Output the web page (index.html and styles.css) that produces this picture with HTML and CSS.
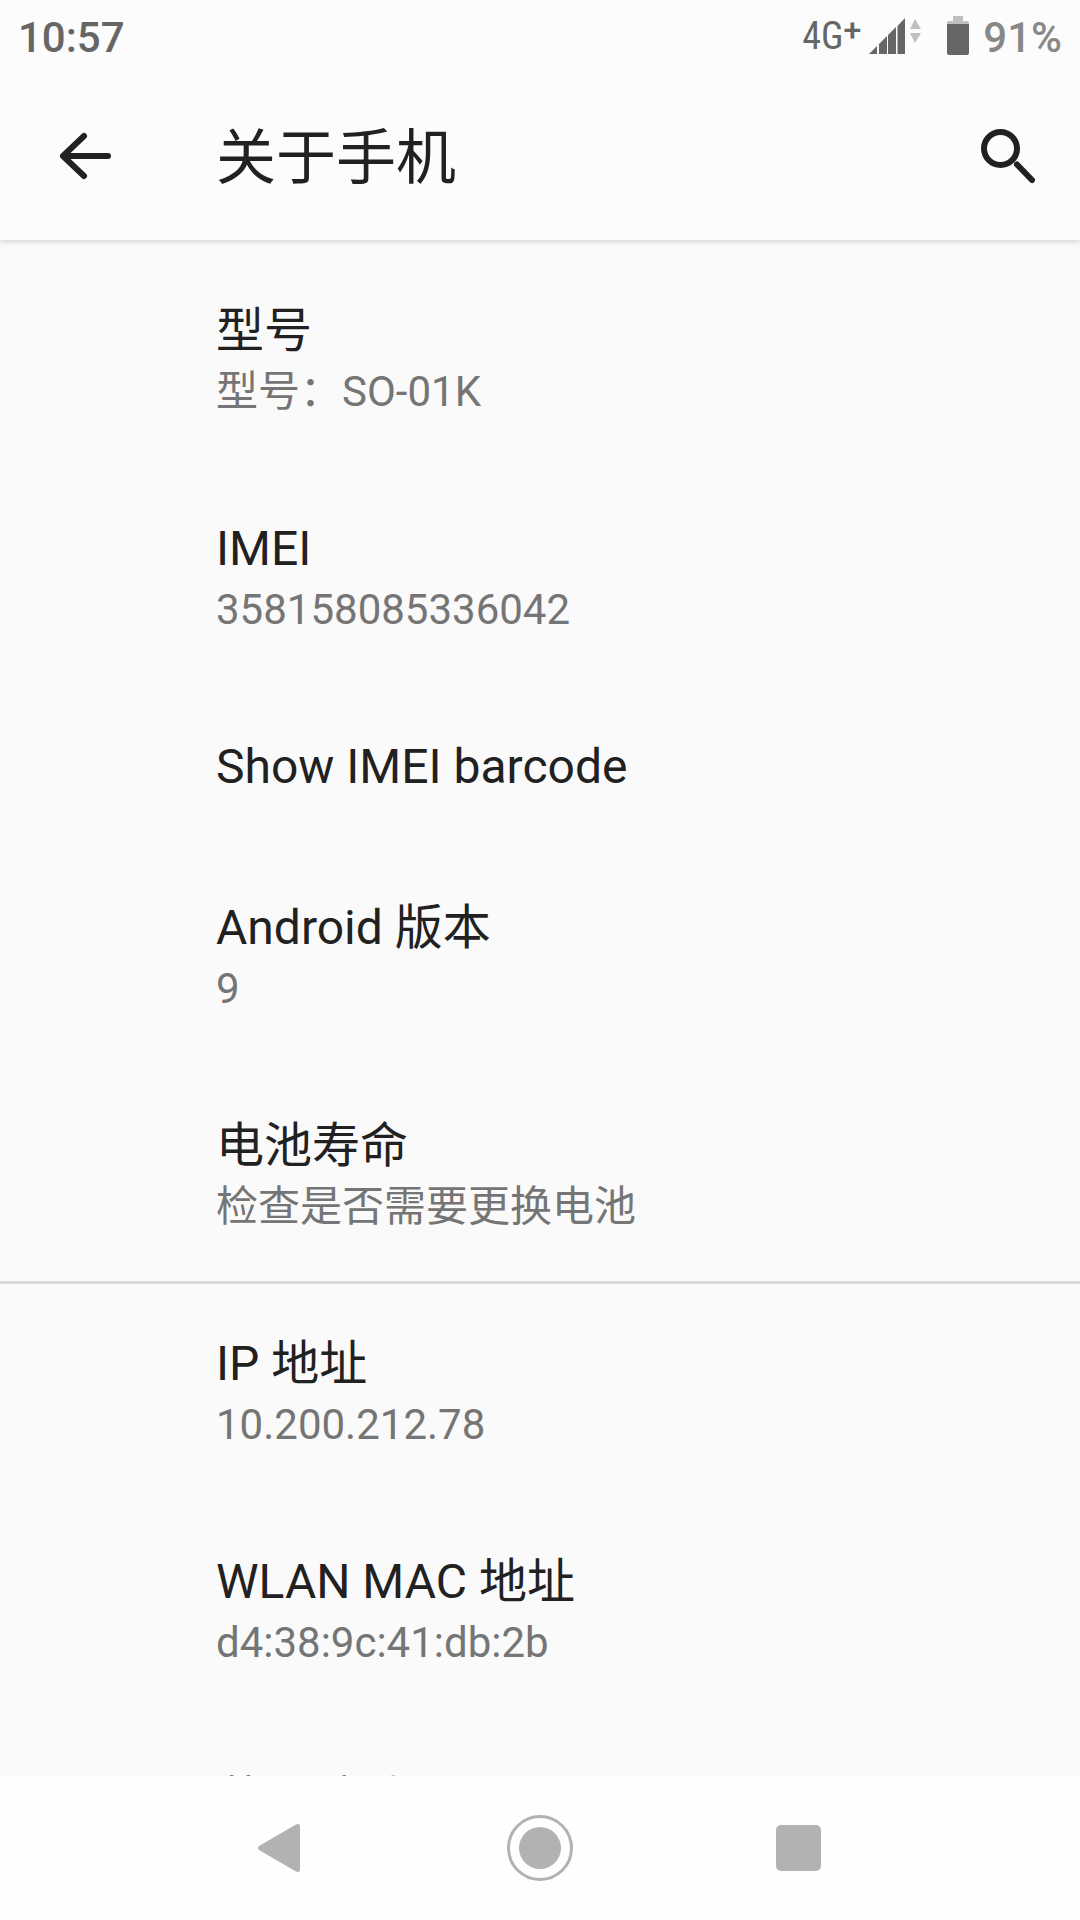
FILE: index.html
```
<!DOCTYPE html>
<html lang="zh-CN">
<head>
  <meta charset="UTF-8">
  <title>关于手机</title>
  <meta name="viewport" content="width=device-width, initial-scale=1.0">
  <link rel="stylesheet" href="styles.css">
</head>
<body>
  <div class="status-bar">
    <span class="clock">10:57</span>
    <div class="status-icons">
      <span class="network">4G<sup>+</sup></span>
      <svg class="signal" width="52" height="40" viewBox="0 0 52 40" aria-hidden="true">
        <path fill="#666" d="M0 38 8 30V38ZM10 38V28L18 20V38ZM19 38V19L27 11V38ZM28.500 38V10L36 2V38Z"/>
        <path fill="#c0c0c0" d="M41 13 46 3 52 13ZM41 17H52L46 27Z"/>
      </svg>
      <svg class="battery" width="22" height="40" viewBox="0 0 22 40" aria-hidden="true">
        <path fill="#c0c0c0" d="M6 0H16V5H20Q22 5 22 7V9H0V7Q0 5 2 5H6Z"/>
        <path fill="#666" d="M0 8H22V37Q22 39 20 39H2Q0 39 0 37Z"/>
      </svg>
      <span class="percent">91%</span>
    </div>
  </div>

  <header class="app-bar">
    <button class="icon-btn" aria-label="返回">
      <svg width="72" height="72" viewBox="0 0 72 72" fill="none" stroke="#212121" stroke-width="6" stroke-linecap="round" stroke-linejoin="round">
        <path d="M60 36H15M36 16 15 36 36 56"/>
      </svg>
    </button>
    <h1>关于手机</h1>
    <button class="icon-btn" aria-label="搜索">
      <svg width="72" height="72" viewBox="0 0 72 72" fill="none" stroke="#212121" stroke-width="6" stroke-linecap="round">
        <circle cx="28.500" cy="28.500" r="16.500"/>
        <path d="M45 44.500 60 60"/>
      </svg>
    </button>
  </header>

  <main>
    <section class="group">
      <a class="row" href="#model"><span class="title">型号</span><span class="summary">型号：SO-01K</span></a>
      <a class="row" href="#imei"><span class="title">IMEI</span><span class="summary">358158085336042</span></a>
      <a class="row" href="#barcode"><span class="title">Show IMEI barcode</span></a>
      <a class="row" href="#android"><span class="title">Android 版本</span><span class="summary">9</span></a>
      <a class="row" href="#battery"><span class="title">电池寿命</span><span class="summary">检查是否需要更换电池</span></a>
    </section>
    <section class="group">
      <a class="row" href="#ip"><span class="title">IP 地址</span><span class="summary">10.200.212.78</span></a>
      <a class="row" href="#mac"><span class="title">WLAN MAC 地址</span><span class="summary">d4:38:9c:41:db:2b</span></a>
      <a class="row" href="#bluetooth"><span class="title">蓝牙地址</span></a>
    </section>
  </main>

  <nav class="nav-bar">
    <button aria-label="后退">
      <svg width="72" height="72" viewBox="0 0 72 72" fill="#b2b2b2">
        <path d="M14 34 51 12.500Q55 11 55 15V57Q55 61 51 59.500L14 38Q12 36 14 34Z"/>
      </svg>
    </button>
    <button aria-label="主屏幕">
      <svg width="72" height="72" viewBox="0 0 72 72">
        <circle cx="36" cy="36" r="31.500" fill="none" stroke="#b2b2b2" stroke-width="3"/>
        <circle cx="36" cy="36" r="21" fill="#b2b2b2"/>
      </svg>
    </button>
    <button aria-label="最近任务">
      <svg width="72" height="72" viewBox="0 0 72 72" fill="#b2b2b2">
        <rect x="13" y="13" width="45" height="46" rx="5"/>
      </svg>
    </button>
  </nav>
</body>
</html>
```
FILE: styles.css
```
* {
  box-sizing: border-box;
}
body {
  margin: 0;
  height: 100vh;
  display: flex;
  flex-direction: column;
  overflow: hidden;
  font-family: Roboto, 'Noto Sans CJK SC', sans-serif;
  background: #fafafa;
  color: #212121;
}
button {
  display: flex;
  justify-content: center;
  padding: 0;
  border: 0;
  background: none;
  cursor: pointer;
}

/* Status bar, kept above the title bar's shadow */
.status-bar {
  flex: none;
  position: relative;
  z-index: 1;
  display: flex;
  justify-content: space-between;
  height: 72px;
  padding: 0 18px;
  background: #fcfcfc;
  font-size: 42px;
  font-weight: 500;
  line-height: 76px;
  color: #666;
}
.status-icons {
  display: flex;
}
.status-icons svg {
  margin-top: 16px;
}
.network {
  font-family: 'Roboto Condensed', 'Liberation Sans Narrow', Roboto, sans-serif;
  font-size: 38px;
  font-weight: 400;
  line-height: 73px;
}
.network sup {
  font-family: Roboto, sans-serif;
  font-size: 32px;
  font-weight: 500;
  line-height: 0;
  vertical-align: 8px;
}
.signal {
  margin: 0 26px 0 8px;
}
.battery {
  margin-right: 14px;
}
.percent {
  color: #888;
}

/* Title bar */
.app-bar {
  flex: none;
  position: relative;
  display: flex;
  align-items: center;
  height: 168px;
  padding: 0 36px 0 48px;
  background: #fcfcfc;
  box-shadow: 0 1px 6px rgba(0, 0, 0, 0.2);
}
.app-bar h1 {
  flex: 1;
  margin: 0 0 0 96px;
  padding-top: 6px;
  font-size: 60px;
  font-weight: 400;
  line-height: 72px;
}

/* Settings list */
main {
  flex: 1;
  min-height: 0;
  overflow: hidden;
  padding-top: 8px;
}
.group + .group {
  box-shadow: inset 0 3px #dadada;
}
.row {
  display: block;
  padding: 50px 48px 46px 216px;
  color: inherit;
  text-decoration: none;
}
.title,
.summary {
  display: block;
}
.title {
  font-size: 48px;
  line-height: 65px;
}
.summary {
  font-size: 42px;
  line-height: 57px;
  color: #757575;
}

/* Navigation bar */
.nav-bar {
  flex: none;
  display: grid;
  grid-template-columns: repeat(3, 24%);
  justify-content: center;
  align-items: center;
  height: 144px;
  background: #fefefe;
}
```
